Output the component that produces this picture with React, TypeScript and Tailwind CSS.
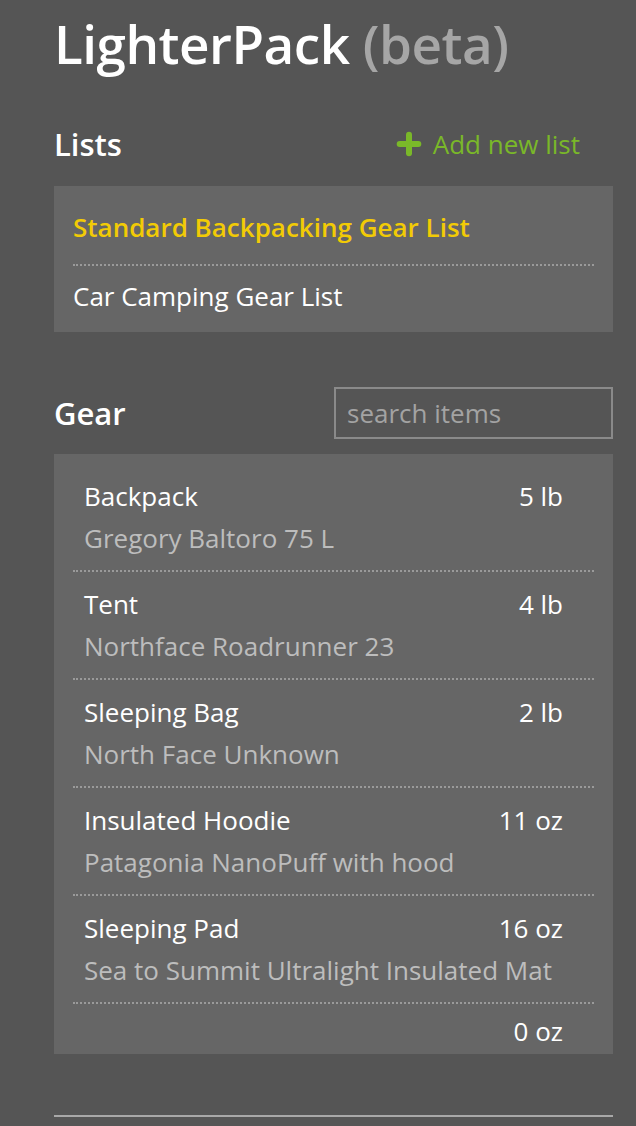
import { Plus } from "lucide-react";

type GearItem = {
  name: string;
  description: string;
  weight: string;
};

const lists = [
  { name: "Standard Backpacking Gear List", active: true },
  { name: "Car Camping Gear List", active: false },
];

const gear: GearItem[] = [
  { name: "Backpack", description: "Gregory Baltoro 75 L", weight: "5 lb" },
  { name: "Tent", description: "Northface Roadrunner 23", weight: "4 lb" },
  { name: "Sleeping Bag", description: "North Face Unknown", weight: "2 lb" },
  { name: "Insulated Hoodie", description: "Patagonia NanoPuff with hood", weight: "11 oz" },
  { name: "Sleeping Pad", description: "Sea to Summit Ultralight Insulated Mat", weight: "16 oz" },
  { name: "", description: "", weight: "0 oz" },
];

export default function App() {
  return (
    <div
      className="min-h-[1126px] w-[636px] bg-[#555555] pl-[54px] pr-[23px] pt-[11px] text-white"
      style={{ fontFamily: '"Open Sans", "Noto Sans", sans-serif' }}
    >
      <h1 className="text-[53px] font-semibold leading-[66px] tracking-[-0.5px]">
        LighterPack <span className="text-[#a6a6a6]">(beta)</span>
      </h1>

      {/* Lists */}
      <div className="mt-[47px] flex items-center justify-between">
        <h2 className="text-[31px] font-semibold leading-[40px]">Lists</h2>
        <button className="mr-[33px] flex items-center gap-[8px] text-[26px] leading-[40px] text-[#7ab829]">
          <Plus size={32} strokeWidth={4.5} className="text-[#7ab829]" />
          Add new list
        </button>
      </div>
      <div className="mt-[22px] bg-[#666666] px-[19px] pt-[11px]">
        {lists.map((list, i) => (
          <div
            key={list.name}
            className={
              i === 0
                ? "border-b-2 border-dotted border-[#9a9a9a] pt-[10px] pb-[17px]"
                : "pt-[10px] pb-[16px]"
            }
          >
            <span
              className={
                list.active
                  ? "text-[26px] font-semibold leading-[40px] text-[#f2cb05]"
                  : "text-[26px] leading-[40px] text-white"
              }
            >
              {list.name}
            </span>
          </div>
        ))}
      </div>

      {/* Gear */}
      <div className="mt-[55px] flex items-center justify-between">
        <h2 className="text-[31px] font-semibold leading-[40px]">Gear</h2>
        <input
          placeholder="search items"
          className="h-[52px] w-[279px] border-2 border-[#8a8a8a] bg-transparent px-[11px] text-[26px] text-white outline-none placeholder:text-[#a3a3a3]"
        />
      </div>
      <div className="mt-[15px] bg-[#666666] px-[19px] pt-[10px]">
        {gear.map((item, i) => (
          <div
            key={i}
            className={
              i < gear.length - 1
                ? "border-b-2 border-dotted border-[#9a9a9a] pl-[11px] pr-[31px] pt-[11px] pb-[11px]"
                : "pl-[11px] pr-[31px] pt-[6px] pb-[2px]"
            }
          >
            <div className="flex justify-between text-[26px] leading-[42px]">
              <span>{item.name}</span>
              <span>{item.weight}</span>
            </div>
            {item.description && (
              <div className="text-[26px] leading-[42px] text-[#bdbdbd]">{item.description}</div>
            )}
          </div>
        ))}
      </div>

      <div className="mt-[61px] h-[2px] bg-[#a8a8a8]" />
    </div>
  );
}
